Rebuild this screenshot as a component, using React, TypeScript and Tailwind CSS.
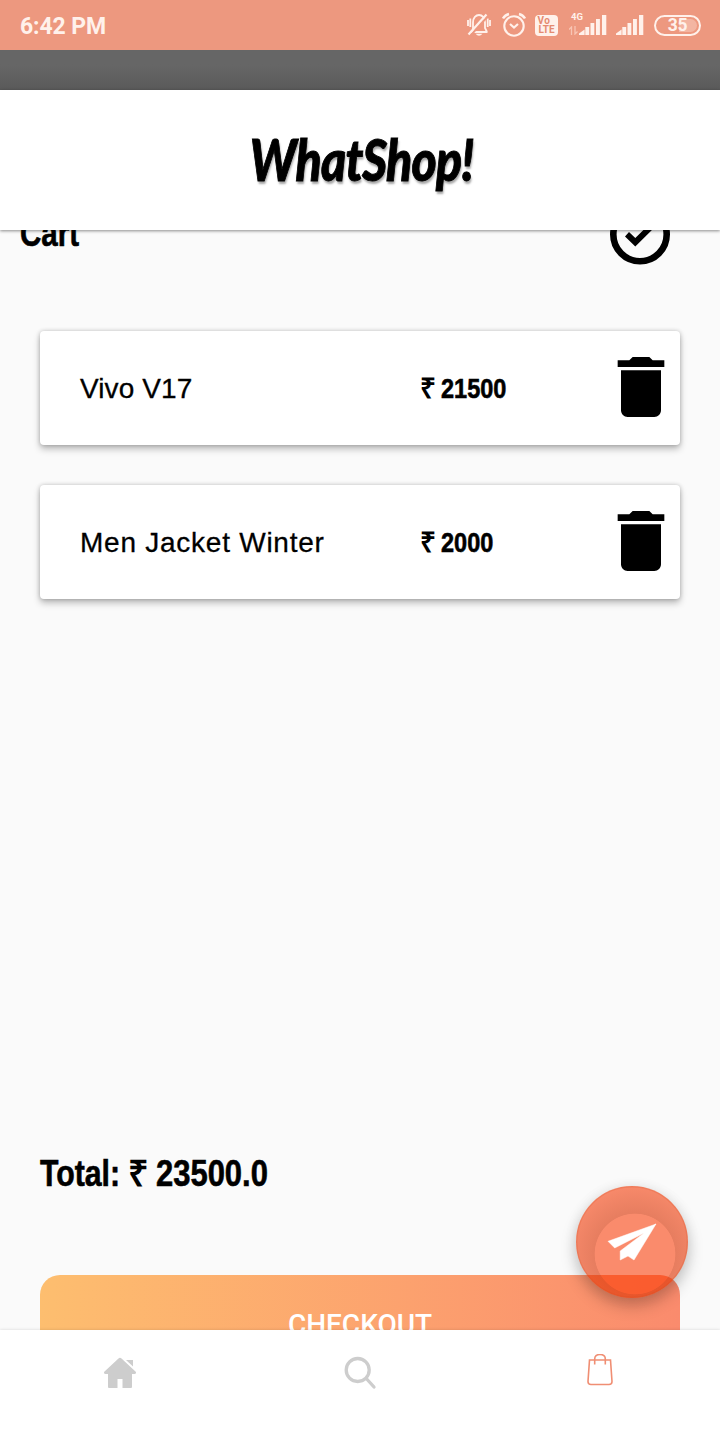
import React from "react";

const bold = "font-['Liberation_Sans',sans-serif] font-bold";
const heavy = "[-webkit-text-stroke:0.6px_black]";

function MutedBell() {
  return (
    <svg className="h-[50px] w-6 shrink-0" viewBox="0 0 24 50" fill="none" stroke="#fff1eb" strokeWidth="1.800">
      <path d="M3.500 32H20.500M6 31V22.500C6 12.500 18 12.500 18 22.500V28L20 32M1 20V26M3.300 18.500V27M23 20V26M20.700 18.500V27" />
      <path d="M8.500 33.800H15.500Q12 37.500 8.500 33.800Z" fill="#fff1eb" stroke="none" />
      <path d="M3.500 35.500L21 16" stroke="#ed987f" strokeWidth="2" />
      <path d="M1.500 34.500L19.500 14.500" strokeWidth="2.200" />
    </svg>
  );
}

function Alarm() {
  return (
    <svg className="ml-[11px] h-[50px] w-6 shrink-0" viewBox="0 0 24 50" fill="none" stroke="#fff1eb" strokeWidth="2.100">
      <circle cx="12" cy="26" r="9.700" />
      <path d="M8 24L12 27.500L16 24" strokeWidth="2.200" />
      <path d="M1 18.500Q3 15 7 14M23 18.500Q21 15 17 14" strokeWidth="2.500" />
    </svg>
  );
}

function Bars({ className }: { className: string }) {
  return (
    <svg className={className} viewBox="0 0 28 50" fill="#fff1eb">
      <path d="M0 35V33.500L5.600 29.500V35ZM6.300 27H10.200V35H6.300ZM11.500 23H15.300V35H11.500ZM17 19H20.900V35H17ZM23 15H27.300V35H23Z" />
    </svg>
  );
}

function StatusBar() {
  return (
    <div className="flex h-[50px] shrink-0 items-center bg-[#ed987f] pr-[19px] pl-5 font-[Roboto,sans-serif] text-[#fff1eb]">
      <div className="pt-[3px] text-[23px] leading-[50px] font-bold tracking-[-0.1px] whitespace-nowrap">6:42 PM</div>
      <div className="ml-auto flex items-center">
        <MutedBell />
        <Alarm />
        <div className="ml-[9px] flex h-[21px] w-[23px] flex-col items-center justify-center rounded-[4px] bg-[#fff1eb] text-[10px] leading-[9.500px] font-bold text-[#e58a70]">
          <span className="-ml-[5px] tracking-[0.5px]">Vo</span>
          <span>LTE</span>
        </div>
        <div className="ml-[11px] flex h-[50px] w-[10px] flex-col">
          <span className="mt-[11px] ml-[2px] text-[9.500px] leading-[11px] font-bold">4G</span>
          <svg className="mt-[4px] h-[9px] w-[9px]" viewBox="0 0 9 9" fill="none" stroke="#f8c5b4" strokeWidth="1.300">
            <path d="M2.500 9V1L0 3.500M6 0V8L8.500 5.500" />
          </svg>
        </div>
        <Bars className="h-[50px] w-7 shrink-0" />
        <Bars className="ml-[9px] h-[50px] w-7 shrink-0" />
        <div className="ml-[10px] flex h-[21px] w-[47px] items-center rounded-full border-2 border-[#fff1eb] p-[2px]">
          <div className="flex h-full w-full items-center justify-center rounded-full bg-linear-to-r from-transparent from-55% to-[#f3b5a2] to-55%">
            <span className="text-[17.500px] leading-[17px] font-bold tracking-[-0.2px]">35</span>
          </div>
        </div>
      </div>
    </div>
  );
}

function CartItem({ name, price, spacing }: { name: string; price: string; spacing: string }) {
  return (
    <div className="flex h-[114px] items-center rounded-[4px] bg-white pl-10 shadow-[0_4px_7px_rgba(0,0,0,0.26),0_0_4px_rgba(0,0,0,0.2)]">
      <div className={`${spacing} w-[340px] pt-[2px] text-[28px] leading-8 whitespace-nowrap [-webkit-text-stroke:0.3px_black]`}>{name}</div>
      <div className={`${bold} flex w-[181px] pt-[1px] text-[28px] leading-8 whitespace-nowrap`}>
        <span className="w-[21px] shrink-0">₹</span>
        <span className={`${heavy} origin-left scale-x-[0.84]`}>{price}</span>
      </div>
      <svg className="-mt-[3px] -mr-2 h-20 w-20 shrink-0" viewBox="0 0 24 24">
        <path d="M6 19c0 1.100.9 2 2 2h8c1.100 0 2-.9 2-2V7H6v12zM19 4h-3.500l-1-1h-5l-1 1H5v2h14V4z" />
      </svg>
    </div>
  );
}

function SendButton() {
  return (
    <button className="absolute top-[956px] left-[576px] h-28 w-28 rounded-full bg-[rgba(250,54,0,0.57)] shadow-[0_8px_16px_rgba(0,0,0,0.22),0_1px_14px_rgba(0,0,0,0.07)]">
      <svg className="h-28 w-28" viewBox="0 0 112 112">
        <defs>
          <radialGradient id="rim" gradientUnits="userSpaceOnUse" cx="59" cy="68" r="72">
            <stop offset="0.555" stopColor="#7a3018" stopOpacity="0" />
            <stop offset="0.565" stopColor="#7a3018" stopOpacity="0.15" />
            <stop offset="1" stopColor="#7a3018" stopOpacity="0" />
          </radialGradient>
        </defs>
        <circle cx="56" cy="56" r="56" fill="url(#rim)" />
        <circle cx="56" cy="56" r="55.300" fill="none" stroke="#d94a20" strokeOpacity="0.2" strokeWidth="1.400" />
        <path d="M80 38L32 55.300L38.700 62L71.500 45.300ZM80 38L44.200 65V74L52 70L58 74Z" fill="#fff" stroke="#fff" strokeWidth="0.500" />
      </svg>
    </button>
  );
}

export default function App() {
  return (
    <div className="flex h-[1440px] w-[720px] flex-col overflow-hidden bg-[#fafafa] font-['Liberation_Sans',sans-serif] text-black">
      <StatusBar />
      <div className="h-10 shrink-0 bg-linear-to-b from-[#666] from-40% to-[#5a5a5a]" />
      <header className="z-10 flex h-[140px] shrink-0 items-center justify-center bg-white shadow-[0_1px_3px_rgba(0,0,0,0.45)]">
        <h1 className="ml-[3px] scale-y-[1.180] pb-[1px] font-[Lato,sans-serif] text-[48px] leading-[60px] font-black tracking-[-0.8px] italic [-webkit-text-stroke:0.8px_black] [text-shadow:1px_2px_2px_rgba(0,0,0,0.35)]">WhatShop!</h1>
      </header>
      <main className="relative h-[1100px] shrink-0 overflow-hidden">
        <div className="-mt-8 flex h-[73px] items-start justify-between pr-[44px] pl-5">
          <h2 className={`${bold} ${heavy} mt-[16px] origin-left scale-x-[0.82] text-[36px] leading-10`}>Cart</h2>
          <svg className="h-[73px] w-[72px] shrink-0" viewBox="0 0 72 73">
            <circle cx="36" cy="36.500" r="26.700" fill="none" stroke="#000" strokeWidth="6.600" />
            <path d="M21 38.500L31.300 48.500L53 27L49 22.500L31.300 40L25 34Z" />
          </svg>
        </div>
        <section className="flex flex-col gap-10 px-10 pt-[60px]">
          <CartItem name="Vivo V17" price="21500" spacing="tracking-[0.1px]" />
          <CartItem name="Men Jacket Winter" price="2000" spacing="tracking-[0.75px]" />
        </section>
        <div className={`${bold} mt-[555px] flex pl-10 text-[36px] leading-10 whitespace-nowrap`}>
          <span className={`${heavy} w-[88px] shrink-0 origin-left scale-x-[0.84]`}>Total:</span>
          <span className="w-[28px] shrink-0">₹</span>
          <span className={`${heavy} origin-left scale-x-[0.86]`}>23500.0</span>
        </div>
        <div className="mt-[81px] px-10">
          <button className="block h-[100px] w-full rounded-[20px] bg-linear-to-r from-[#fdbe6f] to-[#fa8b6d] font-[Roboto,sans-serif] text-[28px] font-medium text-white">CHECKOUT</button>
        </div>
        <SendButton />
      </main>
      <nav className="z-10 flex h-[110px] shrink-0 bg-white pt-6 shadow-[0_0_3px_rgba(0,0,0,0.15)]">
        <div className="flex flex-1 justify-center">
          <svg className="h-10 w-10" viewBox="0 0 40 40" fill="#cdcdcd">
            <path d="M20 3.800Q20.800 3.800 21.500 4.500L36 18Q36.500 20 34.500 20H32V33Q32 34 31 34H22.500V25H17.500V34H9Q8 34 8 33V20H5.500Q3.500 20 4 18L18.500 4.500Q19.200 3.800 20 3.800ZM26 6H33V12.500Z" />
          </svg>
        </div>
        <div className="flex flex-1 justify-center">
          <svg className="h-10 w-10" viewBox="0 0 40 40" fill="none" stroke="#cdcdcd" strokeWidth="3.300" strokeLinecap="round">
            <circle cx="17.700" cy="16" r="11.500" />
            <path d="M26.300 24.500L34 33" />
          </svg>
        </div>
        <div className="flex flex-1 justify-center">
          <svg className="h-10 w-10" viewBox="0 0 40 40" fill="none" stroke="#f08e73" strokeWidth="1.600">
            <path d="M9.500 6H30.500L32 27.500Q32 30.500 29 30.500H11Q8 30.500 8 27.500ZM14.700 10.500V5Q14.700 0.500 20 0.500T25.300 5V10.500" />
          </svg>
        </div>
      </nav>
    </div>
  );
}
